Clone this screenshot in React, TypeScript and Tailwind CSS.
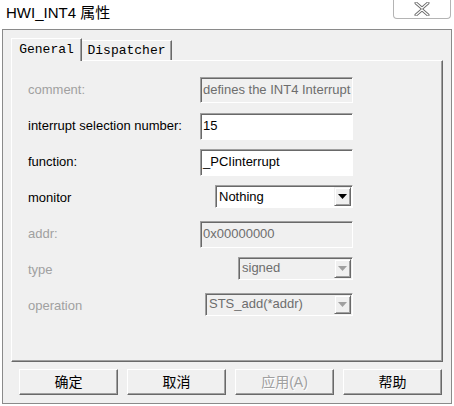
import React from "react";

const sans = "font-['Liberation_Sans','Noto_Sans_CJK_SC',sans-serif]";
const mono = "font-['Liberation_Mono',monospace]";

type RowProps = {
  label: string;
  disabled?: boolean;
  children: React.ReactNode;
};

function Row({ label, disabled, children }: RowProps) {
  return (
    <div className="flex h-[36px] items-center justify-between">
      <span className={disabled ? "text-[#a0a0a0]" : "text-black"}>{label}</span>
      {children}
    </div>
  );
}

function TextBox({ value, disabled, w, h }: { value: string; disabled?: boolean; w: string; h: string }) {
  return (
    <div
      className={`flex items-center border border-t-[#a0a0a0] border-l-[#a0a0a0] border-b-white border-r-white pl-[2px] shadow-[inset_1px_1px_0_#696969] ${w} ${h} ${
        disabled ? "bg-[#f0f0f0] text-[#6d6d6d]" : "bg-white text-black"
      }`}
    >
      {value}
    </div>
  );
}

function Combo({ value, disabled, w }: { value: string; disabled?: boolean; w: string }) {
  return (
    <div
      className={`flex h-[23px] items-stretch border border-t-[#a0a0a0] border-l-[#a0a0a0] border-b-white border-r-white shadow-[inset_1px_1px_0_#696969] ${w} ${
        disabled ? "bg-[#f0f0f0] text-[#6d6d6d]" : "bg-white text-black"
      }`}
    >
      <span className="flex flex-1 items-center pl-[3px]">{value}</span>
      <span className="my-[1px] mr-[1px] flex w-[17px] items-center justify-center border border-t-[#f0f0f0] border-l-[#f0f0f0] border-b-[#696969] border-r-[#696969] bg-[#f0f0f0] shadow-[inset_1px_1px_0_#ffffff,inset_-1px_-1px_0_#a0a0a0]">
        <svg width="9" height="5" viewBox="0 0 9 5">
          <path d="M0 0H9L4.5 5Z" fill={disabled ? "#a0a0a0" : "#000000"} />
        </svg>
      </span>
    </div>
  );
}

function Btn({ label, disabled }: { label: string; disabled?: boolean }) {
  return (
    <div
      className={`flex h-[26px] w-[99px] items-center justify-center border border-t-white border-l-white border-b-[#696969] border-r-[#696969] bg-[#f0f0f0] text-[14px] shadow-[inset_-1px_-1px_0_#a0a0a0] ${
        disabled ? "text-[#a0a0a0] [text-shadow:1px_1px_0_#ffffff]" : "text-black"
      }`}
    >
      {label}
    </div>
  );
}

export default function App() {
  return (
    <div className={`h-[406px] w-[454px] bg-white ${sans} text-[13px]`}>
      <div className="flex h-[29px] items-start justify-between">
        <div className="pl-[6px] pt-[4px] text-[15px] leading-[18px] text-black">HWI_INT4 属性</div>
        <div className="mr-[3px] flex h-[19px] w-[58px] items-center justify-center rounded-b-[4px] border border-t-0 border-[#b4b4b4]">
          <svg width="16" height="14" viewBox="0 0 16 14">
            <path
              d="M2 1L8 6.2L14 1M2 13L8 7.8L14 13"
              stroke="#6a6a6a"
              strokeWidth="3"
              fill="none"
              strokeLinecap="round"
            />
            <path
              d="M2 1L8 6.2L14 1M2 13L8 7.8L14 13"
              stroke="#ffffff"
              strokeWidth="1.2"
              fill="none"
              strokeLinecap="round"
            />
          </svg>
        </div>
      </div>

      <div className="mx-[2px] flex h-[375px] flex-col border border-[#8a8a8a] bg-[#f0f0f0] px-[8px] pt-[8px]">
        <div className="flex items-end">
          <div className="relative z-10 -mb-[1px] flex h-[23px] w-[71px] items-center justify-center border border-b-0 border-t-white border-l-white border-r-[#696969] bg-[#f0f0f0] shadow-[inset_-1px_0_0_#a0a0a0] text-[13px] text-black">
            <span className={mono}>General</span>
          </div>
          <div className="flex h-[20px] w-[90px] items-center justify-center border border-b-0 border-t-white border-l-0 border-r-[#696969] shadow-[inset_-1px_0_0_#a0a0a0] text-black">
            <span className={`${mono} text-[13px]`}>Dispatcher</span>
          </div>
        </div>

        <div className="h-[302px] w-[432px] border border-t-white border-l-white border-b-[#696969] border-r-[#696969] shadow-[inset_-1px_-1px_0_#a0a0a0] pl-[16px] pt-[11px]">
          <div className="w-[325px]">
            <Row label="comment:" disabled>
              <TextBox value="defines the INT4 Interrupt" disabled w="w-[153px]" h="h-[26px]" />
            </Row>
            <Row label="interrupt selection number:">
              <TextBox value="15" w="w-[153px]" h="h-[27px]" />
            </Row>
            <Row label="function:">
              <TextBox value="_PCIinterrupt" w="w-[153px]" h="h-[27px]" />
            </Row>
            <Row label="monitor">
              <div className="-mt-[3px]">
                <Combo value="Nothing" w="w-[138px]" />
              </div>
            </Row>
            <Row label="addr:" disabled>
              <TextBox value="0x00000000" disabled w="w-[153px]" h="h-[27px]" />
            </Row>
            <Row label="type" disabled>
              <div className="-mt-[4px]">
                <Combo value="signed" disabled w="w-[115px]" />
              </div>
            </Row>
            <Row label="operation" disabled>
              <div className="-mt-[4px]">
                <Combo value="STS_add(*addr)" disabled w="w-[148px]" />
              </div>
            </Row>
          </div>
        </div>

        <div className="mt-[7px] flex gap-[9px] pl-[8px]">
          <Btn label="确定" />
          <Btn label="取消" />
          <Btn label="应用(A)" disabled />
          <Btn label="帮助" />
        </div>
      </div>
    </div>
  );
}
